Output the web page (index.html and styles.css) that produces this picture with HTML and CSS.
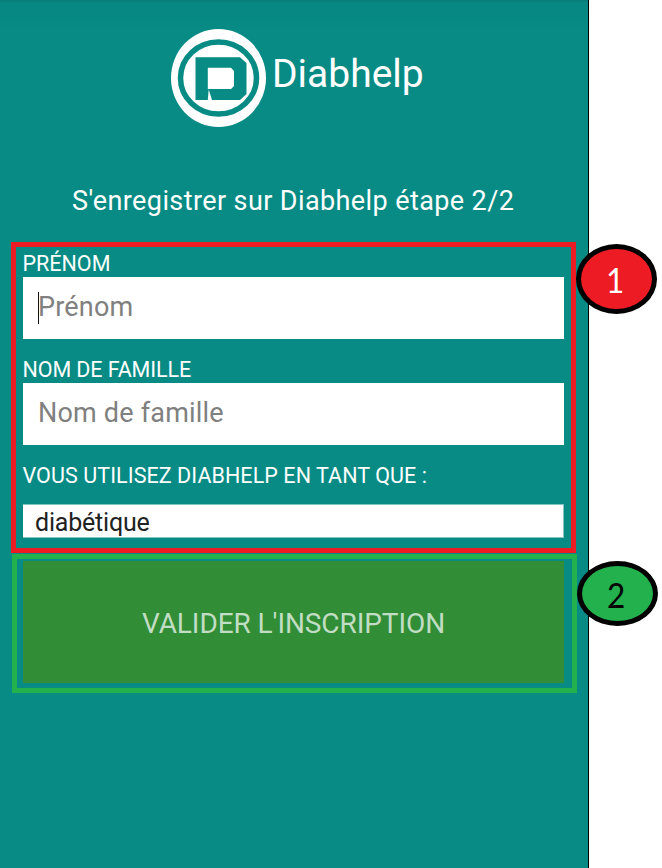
FILE: index.html
```html
<!DOCTYPE html>
<html lang="fr">
<head>
<meta charset="utf-8">
<title>Diabhelp</title>
<link rel="stylesheet" href="styles.css">
</head>
<body>
<main class="screen">
  <header class="brand">
    <svg class="logo" viewBox="0 0 98 100" width="98" height="100">
      <ellipse cx="48.5" cy="50" rx="47.5" ry="49" fill="#fff"/>
      <ellipse cx="48.5" cy="50" rx="38" ry="36" fill="none" stroke="#078b84" stroke-width="5.5"/>
      <path fill="#078b84" fill-rule="evenodd" d="M25.500 29.300H70L76.500 35V66L70 72H42L38.700 61.500L37.800 72H25.500ZM37.800 39.800V61H61L64 58V43L61 39.800Z"/>
    </svg>
    <h1 class="name">Diabhelp</h1>
  </header>
  <p class="subtitle">S'enregistrer sur Diabhelp étape 2/2</p>
  <section class="frame frame-fields">
    <label class="label label-first">PRÉNOM</label>
    <div class="input"><span class="caret"></span><span class="ph">Prénom</span></div>
    <label class="label label-last">NOM DE FAMILLE</label>
    <div class="input"><span class="ph">Nom de famille</span></div>
    <label class="label label-role">VOUS UTILISEZ DIABHELP EN TANT QUE :</label>
    <div class="select"><span>diabétique</span></div>
    <div class="badge badge-one"><span>1</span></div>
  </section>
  <section class="frame frame-submit">
    <button class="submit"><span>VALIDER L'INSCRIPTION</span></button>
    <div class="badge badge-two"><span>2</span></div>
  </section>
</main>
</body>
</html>
```
FILE: styles.css
```css
* { box-sizing: border-box; }
body { margin: 0; background: #fff; font-family: Roboto, sans-serif; overflow: hidden; }
.screen {
  width: 589px; height: 868px;
  border-right: 1px solid #000;
  background: linear-gradient(#077d77, #078782 3px, #078b84 30px);
  color: #fff;
}
.brand { display: flex; height: 182px; padding: 28px 0 0 170px; }
.logo { flex: none; }
.name { margin: 23px 0 0 4px; font-size: 39px; line-height: 46px; font-weight: 400; white-space: nowrap; }
.subtitle { margin: 0; height: 60px; padding-left: 72px; font-size: 27px; line-height: 38px; letter-spacing: .4px; white-space: nowrap; }
.frame { position: relative; width: 565px; border: 5px solid; }
.frame-fields { height: 311px; margin-left: 11px; padding: 6px 7.500px 0 6.500px; border-color: #ed1c24; }
.label { display: block; height: 24px; font-size: 21.500px; line-height: 22px; white-space: nowrap; }
.label-last { letter-spacing: -.1px; }
.input {
  display: flex; height: 61.500px; margin-bottom: 20.500px; padding: 13px 0 0 15.500px;
  background: #fff; color: #808080; font-size: 27px; line-height: 34px; letter-spacing: .2px;
}
.caret { width: 1px; height: 32px; margin: 2px -1px 0 0; background: #111; }
.label-role { height: 39px; letter-spacing: .07px; }
.select {
  height: 34px; padding-left: 12.500px;
  background: #fff; border: solid #83c5c1; border-width: 1px 1px 1px 0;
  color: #222; font-size: 25px; line-height: 36px; letter-spacing: -.2px;
}
.frame-submit { height: 139px; margin: 1px 0 0 12px; padding: 2px 8.500px 0 5.500px; border-color: #22b14c; }
.submit {
  display: block; width: 100%; height: 122px; border: 0; padding: 0 0 0 1px;
  background: #318d36; color: #c1ddc3; font: 400 28px/126px Roboto, sans-serif; letter-spacing: -.08px; white-space: nowrap;
}
.badge {
  position: absolute; display: flex; justify-content: center; align-items: center;
  width: 81px; padding-right: 3px; border: 5px solid #000; border-radius: 50%;
  font: 35px/35px Lato, sans-serif;
}
.badge span { transform: scaleX(.9); }
.badge-one { left: 560px; top: -3px; height: 70px; background: #ed1c24; color: #fff; }
.badge-two { left: 560px; top: 2px; height: 65px; padding-top: 2px; background: #22b14c; color: #000; }
```
